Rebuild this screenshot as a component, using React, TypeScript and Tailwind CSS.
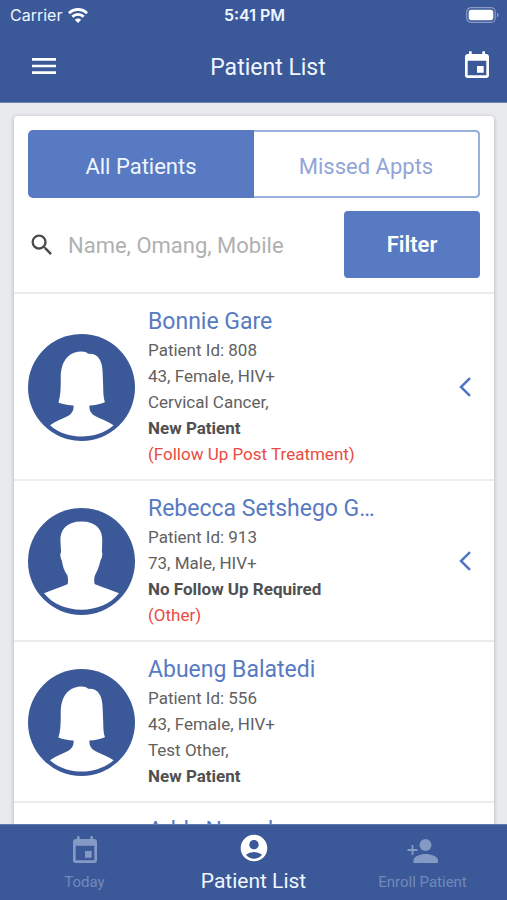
import React from "react";
import { MdAccountCircle, MdEvent, MdMenu, MdSearch } from "react-icons/md";

type Patient = {
  id: number;
  name: string;
  age: number;
  gender: "Female" | "Male";
  diagnosis?: string;
  status: string;
  note?: string;
  hasActions?: boolean;
};

const patients: Patient[] = [
  {
    id: 808,
    name: "Bonnie Gare",
    age: 43,
    gender: "Female",
    diagnosis: "Cervical Cancer,",
    status: "New Patient",
    note: "(Follow Up Post Treatment)",
    hasActions: true,
  },
  {
    id: 913,
    name: "Rebecca Setshego Gaborone",
    age: 73,
    gender: "Male",
    status: "No Follow Up Required",
    note: "(Other)",
    hasActions: true,
  },
  {
    id: 556,
    name: "Abueng Balatedi",
    age: 43,
    gender: "Female",
    diagnosis: "Test Other,",
    status: "New Patient",
  },
  {
    id: 557,
    name: "Addy Ngundu",
    age: 43,
    gender: "Female",
    diagnosis: "Test Other,",
    status: "New Patient",
    note: "(Other)",
  },
];

function Avatar({ gender }: { gender: Patient["gender"] }) {
  return (
    <svg viewBox="0 0 320 320" className="size-[107px] shrink-0" aria-hidden="true">
      <circle cx="160" cy="160" r="160" fill="#3b5998" />
      {gender === "Female" ? (
        <path
          fill="#fff"
          d="M136 214 C120 213 104 210 91 205 C98 182 98 160 98 130 C98 78 124 52 160 52 C168 52 176 54 180 59 C208 56 222 78 223 112 L225 160 C225 178 226 192 230 204 C216 210 200 213 184 214 C182 228 188 238 202 246 C218 255 238 260 256 273 C204 318 116 318 66 273 C82 260 102 255 118 246 C132 238 138 228 136 214 Z"
        />
      ) : (
        <path
          fill="#fff"
          d="M160 40 C204 40 224 64 222 100 L221 132 C224 134 222 148 217 156 C212 178 206 190 200 202 C197 212 198 220 199 227 C224 237 250 245 272 255 C246 288 206 304 160 304 C114 304 74 288 48 255 C70 245 96 237 119 227 C120 218 120 210 118 202 C108 188 104 174 101 156 C97 148 95 136 99 132 L97 100 C95 64 116 40 160 40 Z"
        />
      )}
    </svg>
  );
}

function AddPersonIcon() {
  return (
    <svg viewBox="0 0 32 32" className="size-8 text-[#8599c5]" fill="currentColor" aria-hidden="true">
      <circle cx="18.5" cy="10" r="6" />
      <path d="M6.5 28 V25.5 C6.5 21.2 13.5 19 18.7 19 C24 19 31 21.2 31 25.5 V28 Z" />
      <path d="M5.5 10 V20 M0.5 15 H10.5" fill="none" stroke="currentColor" strokeWidth="1.8" />
    </svg>
  );
}

function StatusBar() {
  return (
    <div className="grid h-[30px] grid-cols-3 items-center pr-2 pl-[10px] font-['Inter','Liberation_Sans',sans-serif] text-base">
      <div className="flex items-center gap-[6px] text-blue-50">
        <span>Carrier</span>
        <svg viewBox="0 0 20 15" className="h-[15px] w-5" fill="none" stroke="#fff" strokeWidth="2.9" aria-hidden="true">
          <path d="M1 5.2 C6 0.2 14 0.2 19 5.2" />
          <path d="M4.3 8.8 C7.5 5.6 12.5 5.6 15.7 8.8" />
          <path d="M10 15 L6.8 11.8 C8.6 10.1 11.4 10.1 13.2 11.8 Z" fill="#fff" stroke="none" />
        </svg>
      </div>
      <span className="text-center font-semibold text-blue-50">5:41 PM</span>
      <svg viewBox="0 0 33 16" className="h-4 w-[33px] justify-self-end" aria-hidden="true">
        <rect x="0.7" y="0.7" width="28.6" height="14.6" rx="4.5" fill="none" stroke="#8b9cc4" strokeWidth="1.2" />
        <rect x="2.7" y="2.8" width="24.6" height="10.4" rx="2.6" fill="#fff" />
        <path d="M31 5.5 C33 6.2 33 9.8 31 10.5 Z" fill="#8b9cc4" />
      </svg>
    </div>
  );
}

function PatientRow({ patient }: { patient: Patient }) {
  return (
    <li className="flex items-center border-t-2 border-[#ececec] px-[14px] pt-[13px] pb-3">
      <Avatar gender={patient.gender} />
      <div className="ml-[13px] w-[234px] min-w-0 text-[17px] leading-[26px] text-[#616161]">
        <h2 className="truncate text-[23px] leading-[30px] text-[#587ac2]">{patient.name}</h2>
        <p>Patient Id: {patient.id}</p>
        <p>
          {patient.age}, {patient.gender}, HIV+
        </p>
        {patient.diagnosis && <p>{patient.diagnosis}</p>}
        <p className="font-bold text-[#505050]">{patient.status}</p>
        {patient.note && <p className="text-[#e94b40]">{patient.note}</p>}
      </div>
      {patient.hasActions && (
        <button type="button" aria-label={`Actions for ${patient.name}`} className="ml-auto p-2">
          <svg viewBox="0 0 14 20" className="h-5 w-[14px]" fill="none" stroke="#4f74c2" strokeWidth="2.5" aria-hidden="true">
            <path d="M12 1.2 L3 10 L12 18.8" />
          </svg>
        </button>
      )}
    </li>
  );
}

export default function App() {
  return (
    <div className="flex h-screen flex-col bg-[#e9eaee] font-['Roboto','Liberation_Sans',sans-serif]">
      <header className="shrink-0 border-b border-[#6d84b3] bg-[#3b5998] text-white">
        <StatusBar />
        <div className="flex h-[72px] items-center justify-between px-[14px]">
          <button type="button" aria-label="Menu" className="pr-7 pl-[14px]">
            <MdMenu className="size-8" />
          </button>
          <h1 className="pt-1 text-[23px] leading-8 text-blue-50">Patient List</h1>
          <button type="button" aria-label="Calendar" className="pl-[13px]">
            <MdEvent className="size-8" />
          </button>
        </div>
      </header>

      <main className="min-h-0 flex-1 overflow-y-auto pt-[13px] pr-[13px] pl-[14px] [scrollbar-width:none]">
        <section className="rounded bg-white shadow-[0_1px_4px_rgba(0,0,0,0.25)]">
          <div className="p-[14px]">
            <div className="grid h-[68px] grid-cols-2 rounded-[5px] bg-[#587ac2] text-[22px]">
              <button type="button" aria-pressed="true" className="pt-1 text-blue-50">
                All Patients
              </button>
              <button
                type="button"
                aria-pressed="false"
                className="rounded-r-[5px] border-2 border-l-0 border-[#9bb0dd] bg-white pt-1 text-[#91a5d8]"
              >
                Missed Appts
              </button>
            </div>
            <div className="mt-[13px] flex items-center">
              <label htmlFor="patient-search" aria-label="Search patients">
                <MdSearch className="size-7 text-[#4a4a4a]" />
              </label>
              <input
                id="patient-search"
                type="search"
                placeholder="Name, Omang, Mobile"
                className="min-w-0 flex-1 pt-px pl-3 text-[22px] outline-none placeholder:text-[#b0b0b0]"
              />
              <button type="button" className="h-[67px] w-[136px] rounded bg-[#587ac2] text-[22px] font-semibold text-white">
                Filter
              </button>
            </div>
          </div>
          <ul>
            {patients.map((patient) => (
              <PatientRow key={patient.id} patient={patient} />
            ))}
          </ul>
        </section>
      </main>

      <nav className="grid h-[76px] shrink-0 grid-cols-3 border-t border-[#5f78ad] bg-[#3b5998] text-[15px] text-[#7189bb]">
        <a href="#today" className="flex flex-col items-center pt-[10px]">
          <MdEvent className="size-8 text-[#8599c5]" />
          <span className="mt-[5px] leading-5">Today</span>
        </a>
        <a href="#patients" aria-current="page" className="flex flex-col items-center pt-[7px] text-white">
          <MdAccountCircle className="size-8" />
          <span className="mt-[5px] text-[21px] leading-6 text-blue-50">Patient List</span>
        </a>
        <a href="#enroll" className="flex flex-col items-center pt-[10px]">
          <AddPersonIcon />
          <span className="mt-[5px] leading-5">Enroll Patient</span>
        </a>
      </nav>
    </div>
  );
}
